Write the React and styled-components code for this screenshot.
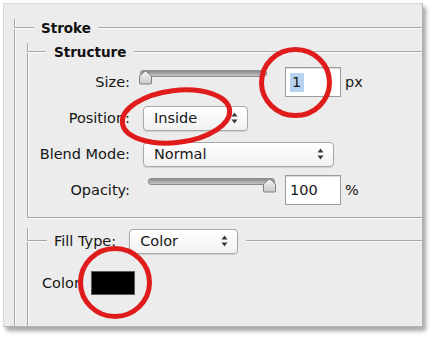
import styled, { createGlobalStyle } from "styled-components";

const GlobalStyle = createGlobalStyle`
	html, body {
		margin: 0;
		padding: 0;
		background: #ffffff;
	}
	body {
		font-family: "DejaVu Sans", "Liberation Sans", sans-serif;
		color: #161616;
	}
`;

export default function App() {
	return (
		<Window>
			<GlobalStyle />
			<Panel>
				<Group>
					<Header>
						<Rule $width={20} />
						<Title>Stroke</Title>
						<Rule $grow />
					</Header>

					<Group $inset={12} $top={14} $closed>
						<Header>
							<Rule $width={19} />
							<Title $gap={8}>Structure</Title>
							<Rule $grow />
						</Header>
						<Rows>
							<Row>
								<Label>Size:</Label>
								<Slider value={0} $left={8} $right={16} />
								<NumberField>
									<Selected>1</Selected>
								</NumberField>
								<Unit>px</Unit>
							</Row>
							<Row>
								<Label>Position:</Label>
								<Popup width={105} value="Inside" />
							</Row>
							<Row>
								<Label>Blend Mode:</Label>
								<Popup width={191} value="Normal" />
							</Row>
							<Row>
								<Label>Opacity:</Label>
								<Slider value={100} $left={16} $right={8} />
								<NumberField>100</NumberField>
								<Unit>%</Unit>
							</Row>
						</Rows>
					</Group>

					<Group $inset={12} $top={22}>
						<Header $tall>
							<Rule $width={20} />
							<FieldLabel>Fill Type:</FieldLabel>
							<Popup width={109} value="Color" $noLeft />
							<Rule $grow $gap={8} />
						</Header>
						<ColorRow>
							<FieldLabel>Color:</FieldLabel>
							<Swatch />
						</ColorRow>
					</Group>
				</Group>
			</Panel>

			{/* annotation marks drawn over the dialog */}
			<Marks viewBox="0 0 434 339">
				<ellipse cx="295.5" cy="82.5" rx="34" ry="33" />
				<ellipse cx="176" cy="116.5" rx="54" ry="26" transform="rotate(-7 176 116.5)" />
				<ellipse cx="115" cy="282.5" rx="34.5" ry="34" />
			</Marks>
		</Window>
	);
}

function Slider({ value, $left, $right }) {
	return (
		<SliderBox $left={$left} $right={$right}>
			<Track />
			<Thumb style={{ left: (value / 100) * 116 }} viewBox="0 0 15 15">
				<defs>
					<linearGradient id={"thumb" + value} x1="0" y1="0" x2="0" y2="1">
						<stop offset="0" stopColor="#f4f4f4" />
						<stop offset="1" stopColor="#c9c9c9" />
					</linearGradient>
				</defs>
				<path
					d="M1.5 13 V7 Q1.5 5.8 2.6 5 L6.6 1.6 Q7.5 0.9 8.4 1.6 L12.4 5 Q13.5 5.8 13.5 7 V13 Q13.5 14 12.5 14 H2.5 Q1.5 14 1.5 13 Z"
					fill={"url(#thumb" + value + ")"}
					stroke="#7f7f7f"
					strokeWidth="1"
				/>
			</Thumb>
		</SliderBox>
	);
}

function Popup({ width, value, $noLeft }) {
	return (
		<PopupButton $width={width} $noLeft={$noLeft}>
			<span>{value}</span>
			<Arrows viewBox="0 0 7 12">
				<path d="M3.5 0.5 L6.5 4.5 H0.5 Z" fill="#3a3a3a" />
				<path d="M3.5 11.5 L6.5 7.5 H0.5 Z" fill="#3a3a3a" />
			</Arrows>
		</PopupButton>
	);
}

let Window = styled.div`
	position: relative;
	width: 434px;
	height: 339px;
	padding: 3px;
	box-sizing: border-box;
	overflow: hidden;
`;

let Panel = styled.div`
	width: 420px;
	height: 324px;
	box-sizing: border-box;
	background: #ececec;
	border-top: 1px solid #d9d9d9;
	border-left: 1px solid #d9d9d9;
	border-right: 1px solid #b4b4b4;
	border-bottom: 1px solid #b4b4b4;
	box-shadow: 3px 4px 4px rgba(0, 0, 0, 0.35);
	padding: 23px 0 0 10px;
	overflow: hidden;
`;

let Group = styled.div`
	margin: ${(p) => p.$top || 0}px -30px 0 ${(p) => p.$inset || 0}px;
	border-left: 1px solid #a6a6a6;
	border-bottom: ${(p) => (p.$closed ? "1px solid #a6a6a6" : "none")};
	box-shadow: inset 1px 0 0 #fbfbfb ${(p) => (p.$closed ? ", 0 1px 0 #fbfbfb" : "")};
	padding-bottom: ${(p) => (p.$closed ? 0 : 60)}px;
`;

let Header = styled.div`
	display: flex;
	align-items: center;
	height: ${(p) => (p.$tall ? 26 : 18)}px;
	margin: ${(p) => (p.$tall ? -12 : -8)}px 0 0 -1px;
`;

let Rule = styled.span`
	flex: ${(p) => (p.$grow ? "1 1 auto" : "none")};
	width: ${(p) => (p.$width ? p.$width + "px" : "auto")};
	margin-left: ${(p) => p.$gap || 0}px;
	height: 0;
	border-top: 1px solid #a6a6a6;
	border-bottom: 1px solid #fbfbfb;
`;

let Title = styled.span`
	margin: 0 ${(p) => p.$gap || 7}px;
	font-size: 13.5px;
	font-weight: bold;
	color: #111;
	white-space: nowrap;
`;

let FieldLabel = styled.span`
	margin: 0 13px 0 7px;
	font-size: 14.5px;
	white-space: nowrap;
`;

let Rows = styled.div`
	display: flex;
	flex-direction: column;
	gap: 6px;
	padding: 6px 0 12px;
`;

let Row = styled.div`
	display: flex;
	align-items: center;
	height: 30px;
`;

let Label = styled.span`
	width: 102px;
	flex: none;
	text-align: right;
	font-size: 14.5px;
	white-space: nowrap;
`;

let SliderBox = styled.div`
	position: relative;
	flex: none;
	width: 131px;
	height: 16px;
	align-self: flex-start;
	margin: 3px ${(p) => p.$right}px 0 ${(p) => p.$left}px;
`;

let Track = styled.div`
	margin: 0 2px;
	height: 5px;
	border-radius: 3px;
	border: 1px solid #8c8c8c;
	background: linear-gradient(#8a8a8a, #c6c6c6);
`;

let Thumb = styled.svg`
	position: absolute;
	top: 0;
	width: 15px;
	height: 15px;
`;

let NumberField = styled.div`
	flex: none;
	width: 56px;
	height: 30px;
	box-sizing: border-box;
	border: 1px solid #9b9b9b;
	box-shadow: inset 0 1px 1px rgba(0, 0, 0, 0.15);
	background: #fff;
	padding-left: 4px;
	display: flex;
	align-items: center;
	font-size: 14.5px;
`;

let Selected = styled.span`
	background: #b6d3f2;
	padding: 1px 3px 1px 2px;
	line-height: 17px;
`;

let Unit = styled.span`
	margin-left: 4px;
	font-size: 14.5px;
`;

let PopupButton = styled.div`
	flex: none;
	width: ${(p) => p.$width}px;
	height: 25px;
	box-sizing: border-box;
	margin-left: ${(p) => (p.$noLeft ? 0 : 13)}px;
	padding: 0 9px 0 10px;
	display: flex;
	align-items: center;
	justify-content: space-between;
	border: 1px solid #a9a9a9;
	border-radius: 4px;
	background: linear-gradient(#ffffff, #f1f1f1);
	box-shadow: 0 1px 1px rgba(0, 0, 0, 0.12);
	font-size: 14.5px;
`;

let Arrows = styled.svg`
	width: 7px;
	height: 12px;
`;

let ColorRow = styled.div`
	display: flex;
	align-items: center;
	height: 24px;
	margin-top: 17px;
	padding-left: 7px;
	& > span {
		margin-right: 6px;
	}
`;

let Swatch = styled.div`
	width: 44px;
	height: 24px;
	box-sizing: border-box;
	background: #000;
	border: 1px solid #5a5a5a;
`;

let Marks = styled.svg`
	position: absolute;
	top: 0;
	left: 0;
	width: 434px;
	height: 339px;
	pointer-events: none;
	fill: none;
	stroke: #e01b1b;
	stroke-width: 5;
`;
